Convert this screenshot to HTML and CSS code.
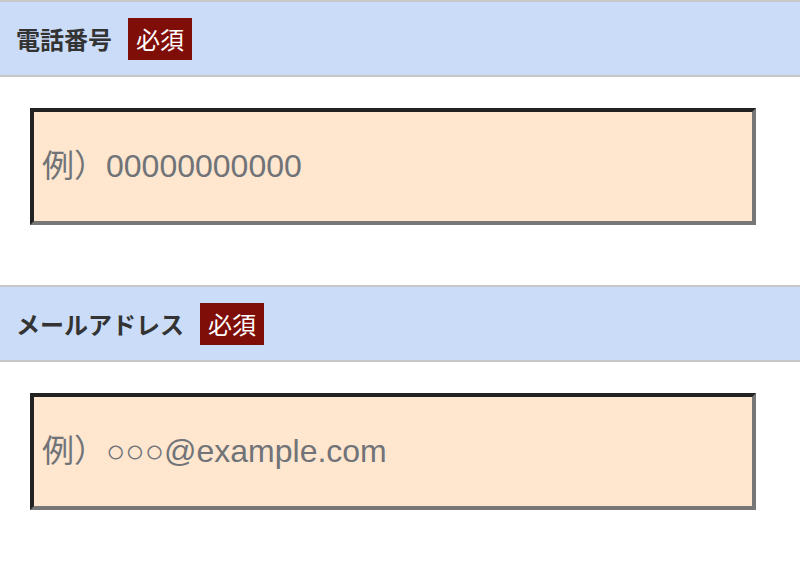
FILE: index.html
```html
<!DOCTYPE html>
<html lang="ja">
<head>
<meta charset="utf-8">
<title>フォーム</title>
<link rel="stylesheet" href="styles.css">
</head>
<body>
<form class="form">
  <section class="field">
    <div class="field-head">
      <span class="field-label">電話番号</span>
      <span class="badge">必須</span>
    </div>
    <div class="field-body">
      <input class="text-input" type="tel" placeholder="例）00000000000">
    </div>
  </section>
  <section class="field">
    <div class="field-head">
      <span class="field-label">メールアドレス</span>
      <span class="badge">必須</span>
    </div>
    <div class="field-body">
      <input class="text-input" type="email" placeholder="例）○○○@example.com">
    </div>
  </section>
</form>
</body>
</html>
```

FILE: styles.css
```css
html, body {
  margin: 0;
  padding: 0;
  background: #ffffff;
}

.form {
  display: flex;
  flex-direction: column;
}

.field-head {
  display: flex;
  align-items: center;
  gap: 16px;
  height: 73px;
  padding: 0 16px;
  background: #cadcf8;
  border-top: 2px solid #c8c8c8;
  border-bottom: 2px solid #c8c8c8;
}

.field-label {
  font-family: "Noto Sans CJK JP", "Noto Sans", sans-serif;
  font-weight: 700;
  font-size: 24px;
  line-height: 1;
  color: #333333;
}

.badge {
  font-family: "Noto Sans CJK JP", "Noto Sans", sans-serif;
  font-weight: 400;
  font-size: 24px;
  line-height: 26px;
  padding: 8px 8px;
  color: #ffffff;
  background: #800e08;
}

.field-body {
  padding: 31px 0 60px 30px;
}

.text-input {
  display: block;
  box-sizing: border-box;
  width: 726px;
  height: 117px;
  margin: 0;
  padding: 0 8px;
  background: #fee6cf;
  border-style: solid;
  border-width: 4px;
  border-color: #222222 #777777 #777777 #222222;
  border-radius: 0;
  font-family: "Liberation Sans", "Noto Sans CJK JP", sans-serif;
  font-size: 32px;
  color: #333333;
  outline: none;
}

.text-input::placeholder {
  color: #707377;
  opacity: 1;
}
```
